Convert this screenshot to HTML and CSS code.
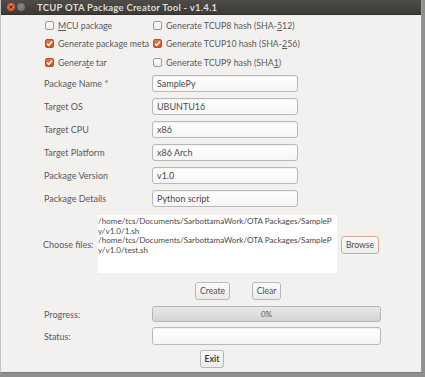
FILE: index.html
```html
<!DOCTYPE html>
<html>
<head>
<meta charset="utf-8">
<link rel="stylesheet" href="styles.css">
</head>
<body>
<div class="window">
  <div class="titlebar">
    <span class="wbtn close"><svg width="8" height="8" viewBox="0 0 8 8"><path d="M2.5 2.5L5.5 5.5M5.5 2.5L2.5 5.5" stroke="#3a2a20" stroke-width="1"/></svg></span>
    <span class="wbtn mini"></span>
    <span class="title">TCUP OTA Package Creator Tool - v1.4.1</span>
  </div>
  <div class="content">
    <div class="checks">
      <label class="chk"><span class="box"></span><span><u>M</u>CU package</span></label>
      <label class="chk"><span class="box"></span><span>Generate TCUP8 hash (SHA-<u>5</u>12)</span></label>
      <label class="chk"><span class="box on"><svg width="9" height="9" viewBox="0 0 9 9"><path d="M2 4.6L3.8 6.4L7 2.6" fill="none" stroke="#fff" stroke-width="1.5"/></svg></span><span>Generate package meta</span></label>
      <label class="chk"><span class="box on"><svg width="9" height="9" viewBox="0 0 9 9"><path d="M2 4.6L3.8 6.4L7 2.6" fill="none" stroke="#fff" stroke-width="1.5"/></svg></span><span>Generate TCUP10 hash (SHA-<u>2</u>56)</span></label>
      <label class="chk"><span class="box on"><svg width="9" height="9" viewBox="0 0 9 9"><path d="M2 4.6L3.8 6.4L7 2.6" fill="none" stroke="#fff" stroke-width="1.5"/></svg></span><span>Genera<u>t</u>e tar</span></label>
      <label class="chk"><span class="box"></span><span>Generate TCUP9 hash (SHA<u>1</u>)</span></label>
    </div>
    <div class="form">
      <span class="lbl">Package Name *</span><span class="field">SamplePy</span>
      <span class="lbl">Target OS</span><span class="field">UBUNTU16</span>
      <span class="lbl">Target CPU</span><span class="field">x86</span>
      <span class="lbl">Target Platform</span><span class="field">x86 Arch</span>
      <span class="lbl">Package Version</span><span class="field">v1.0</span>
      <span class="lbl">Package Details</span><span class="field">Python script</span>
    </div>
    <div class="files">
      <span class="flbl">Choose files:</span>
      <div class="filebox">
        <div>/home/tcs/Documents/SarbottamaWork/OTA Packages/SampleP</div>
        <div>y/v1.0/1.sh</div>
        <div>/home/tcs/Documents/SarbottamaWork/OTA Packages/SampleP</div>
        <div>y/v1.0/test.sh</div>
      </div>
      <span class="btn browse">Browse</span>
    </div>
    <div class="actions">
      <span class="btn create">Create</span>
      <span class="btn clear">Clear</span>
    </div>
    <div class="row prog">
      <span class="lbl">Progress:</span>
      <div class="bar">0%</div>
    </div>
    <div class="row stat">
      <span class="lbl">Status:</span>
      <div class="field wide"></div>
    </div>
    <div class="exitrow">
      <span class="btn exit">Exit</span>
    </div>
  </div>
</div>
</body>
</html>
```
FILE: styles.css
```css
html, body { margin: 0; padding: 0; }
body {
  background: #8f8f8f;
  font-family: "Lato", "DejaVu Sans", sans-serif;
  width: 425px;
  height: 377px;
  overflow: hidden;
}
.window {
  width: 420px;
  height: 372px;
  background: #f2f1f0;
  border-left: 1px solid #c4c4c4;
  border-right: 1px solid #9c9c9c;
  border-bottom: 1px solid #7d7d7d;
  display: flex;
  flex-direction: column;
  white-space: nowrap;
}
.titlebar {
  height: 15px;
  flex: none;
  background: linear-gradient(#4d4c47, #3c3b37);
  display: flex;
  align-items: center;
  padding-left: 6px;
  border-bottom: 1px solid #2f2e2b;
  box-sizing: border-box;
}
.wbtn {
  width: 8px;
  height: 8px;
  border-radius: 50%;
  display: flex;
  margin-right: 2px;
}
.close { background: radial-gradient(circle at 50% 40%, #f07a4a, #d9461c); }
.mini { background: radial-gradient(circle at 50% 40%, #8a8984, #67665f); }
.title {
  color: #dfdbd2;
  font-weight: bold;
  font-size: 9.5px;
  margin-left: 10px;
  letter-spacing: 0.25px;
}
.content {
  padding-left: 42px;
  color: #5a5a5a;
  font-size: 9px;
}
.checks {
  margin-top: 1px;
  display: grid;
  grid-template-columns: 108px 200px;
  grid-auto-rows: 18.5px;
  font-size: 8.8px;
}
.chk {
  display: flex;
  align-items: center;
  padding-left: 2px;
}
.box {
  width: 9px;
  height: 9px;
  flex: none;
  box-sizing: border-box;
  border: 1px solid #9a9a9a;
  border-radius: 2px;
  background: linear-gradient(#ffffff, #ececec);
  margin-right: 4px;
  display: flex;
}
.box.on {
  border-color: #c24a22;
  background: linear-gradient(#e8714a, #d4521f);
}
.box svg { margin: -1px; }
u { text-decoration-thickness: 1px; text-underline-offset: 1px; }
.form {
  margin-top: 3.5px;
  display: grid;
  grid-template-columns: 109px 146px;
  grid-auto-rows: 17px;
  row-gap: 6px;
}
.lbl { display: flex; align-items: center; padding-left: 1px; }
.field {
  box-sizing: border-box;
  border: 1px solid #b9b9b9;
  border-radius: 3px;
  background: linear-gradient(#ffffff, #f6f6f6);
  box-shadow: inset 0 1px 1px rgba(0,0,0,0.06);
  display: flex;
  align-items: center;
  padding-left: 4px;
  color: #4a4a4a;
}
.files {
  margin-top: 8px;
  display: flex;
  align-items: center;
}
.flbl {
  width: 50px;
  flex: none;
  text-align: right;
  margin-right: 5px;
}
.filebox {
  width: 239px;
  height: 58px;
  flex: none;
  background: #ffffff;
  box-sizing: border-box;
  padding-top: 2px;
  font-size: 8.1px;
  line-height: 9.5px;
  color: #4a4a4a;
  overflow: hidden;
}
.btn {
  box-sizing: border-box;
  height: 18px;
  flex: none;
  border: 1px solid #b8b8b8;
  border-radius: 3px;
  background: linear-gradient(#fbfbfb, #ebebeb);
  display: flex;
  align-items: center;
  justify-content: center;
  color: #4f4f4f;
  font-size: 8.6px;
}
.browse {
  width: 38px;
  margin-left: 4px;
  margin-top: 2px;
  border-color: #e1a48a;
}
.actions {
  margin-top: 9px;
  display: flex;
  padding-left: 152px;
  gap: 22px;
}
.create { width: 35px; }
.clear { width: 29px; }
.row {
  display: grid;
  grid-template-columns: 109px 229px;
}
.prog { margin-top: 6px; height: 16px; }
.bar {
  box-sizing: border-box;
  border: 1px solid #b4b4b4;
  border-radius: 3px;
  background: linear-gradient(#e9e9e9, #d3d3d3);
  display: flex;
  align-items: center;
  justify-content: center;
  font-size: 8px;
  color: #555;
}
.stat { margin-top: 5px; height: 18px; }
.exitrow {
  margin-top: 5px;
  padding-left: 157px;
  display: flex;
}
.exit { width: 24px; font-weight: bold; color: #3f3f3f; }
```
